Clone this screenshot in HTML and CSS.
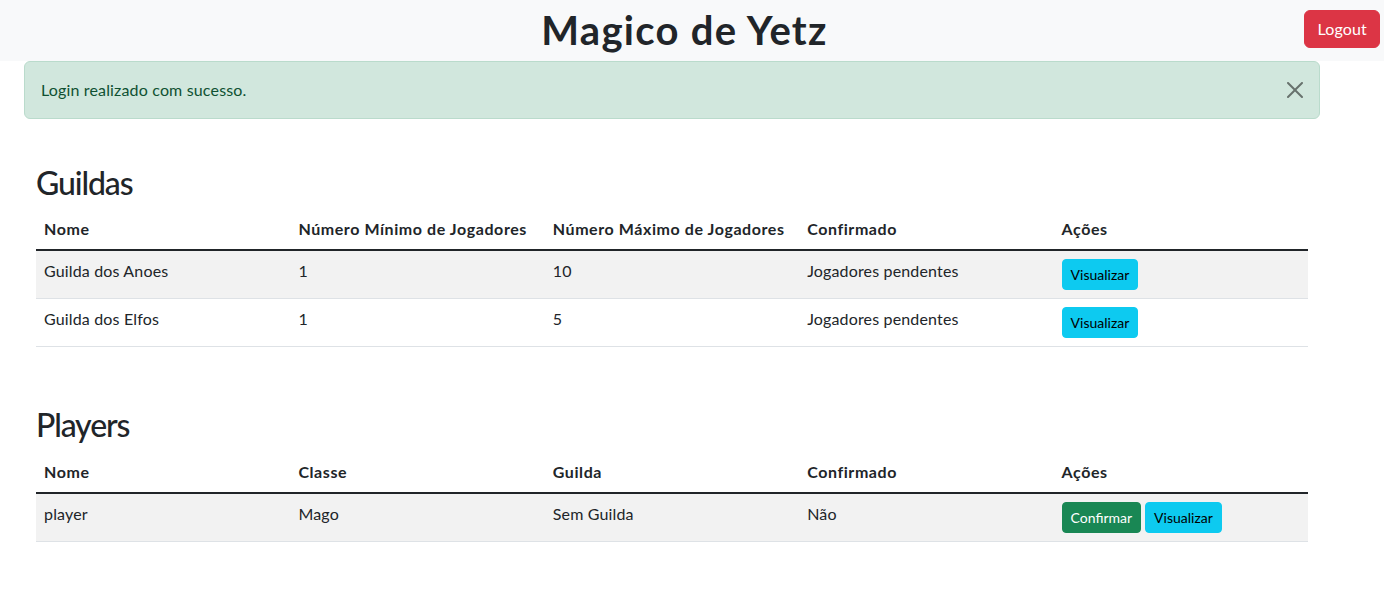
FILE: index.html
```html
<!DOCTYPE html>
<html lang="pt-BR">
<head>
<meta charset="utf-8">
<title>Magico de Yetz</title>
<link rel="stylesheet" href="styles.css">
</head>
<body>
<header class="topbar">
  <div class="topbar-side"></div>
  <h1 class="brand">Magico de Yetz</h1>
  <div class="topbar-side topbar-right">
    <button class="btn btn-danger" type="button">Logout</button>
  </div>
</header>

<div class="alert alert-success" role="alert">
  <span>Login realizado com sucesso.</span>
  <button class="btn-close" type="button" aria-label="Close">
    <svg viewBox="0 0 16 16" width="16" height="16" aria-hidden="true"><path d="M.293.293a1 1 0 0 1 1.414 0L8 6.586 14.293.293a1 1 0 1 1 1.414 1.414L9.414 8l6.293 6.293a1 1 0 0 1-1.414 1.414L8 9.414l-6.293 6.293a1 1 0 0 1-1.414-1.414L6.586 8 .293 1.707a1 1 0 0 1 0-1.414z"/></svg>
  </button>
</div>

<main class="content">
  <section class="block">
    <h2 class="block-title">Guildas</h2>
    <table class="table">
      <thead>
        <tr>
          <th>Nome</th>
          <th>Número Mínimo de Jogadores</th>
          <th>Número Máximo de Jogadores</th>
          <th>Confirmado</th>
          <th>Ações</th>
        </tr>
      </thead>
      <tbody>
        <tr class="striped">
          <td>Guilda dos Anoes</td>
          <td>1</td>
          <td>10</td>
          <td>Jogadores pendentes</td>
          <td><button class="btn btn-sm btn-info" type="button">Visualizar</button></td>
        </tr>
        <tr>
          <td>Guilda dos Elfos</td>
          <td>1</td>
          <td>5</td>
          <td>Jogadores pendentes</td>
          <td><button class="btn btn-sm btn-info" type="button">Visualizar</button></td>
        </tr>
      </tbody>
    </table>
  </section>

  <section class="block">
    <h2 class="block-title">Players</h2>
    <table class="table">
      <thead>
        <tr>
          <th>Nome</th>
          <th>Classe</th>
          <th>Guilda</th>
          <th>Confirmado</th>
          <th>Ações</th>
        </tr>
      </thead>
      <tbody>
        <tr class="striped">
          <td>player</td>
          <td>Mago</td>
          <td>Sem Guilda</td>
          <td>Não</td>
          <td class="actions"><button class="btn btn-sm btn-success" type="button">Confirmar</button><button class="btn btn-sm btn-info" type="button">Visualizar</button></td>
        </tr>
      </tbody>
    </table>
  </section>
</main>
</body>
</html>
```

FILE: styles.css
```css
* { box-sizing: border-box; }

html, body {
  margin: 0;
  padding: 0;
}

body {
  font-family: "Lato", "Noto Sans", "Liberation Sans", sans-serif;
  font-size: 16px;
  line-height: 24px;
  letter-spacing: 0.01em;
  color: #212529;
  background: #ffffff;
}

.topbar {
  display: grid;
  grid-template-columns: 1fr auto 1fr;
  align-items: start;
  height: 61px;
  background: #f8f9fa;
}

.brand {
  margin: 0 15px 0 0;
  font-size: 40px;
  line-height: 61px;
  font-weight: 700;
  letter-spacing: 0.032em;
  color: #212529;
}

.topbar-right {
  display: flex;
  justify-content: flex-end;
  padding: 10px 4px 0 0;
}

.btn {
  display: inline-block;
  font-family: inherit;
  font-size: 16px;
  line-height: 24px;
  letter-spacing: 0.01em;
  padding: 6px 12px;
  border: 1px solid transparent;
  border-radius: 6px;
  cursor: pointer;
  vertical-align: middle;
}

.btn-danger {
  background: #dc3545;
  border-color: #dc3545;
  color: #ffffff;
}

.btn-sm {
  font-size: 14px;
  line-height: 21px;
  letter-spacing: 0;
  padding: 4px 8px;
  border-radius: 4px;
}

.btn-info {
  background: #0dcaf0;
  border-color: #0dcaf0;
  color: #000000;
}

.btn-success {
  background: #198754;
  border-color: #198754;
  color: #ffffff;
}

.actions .btn + .btn {
  margin-left: 4px;
}

.alert {
  position: relative;
  width: 1296px;
  margin: 0 0 0 24px;
  padding: 16px 48px 16px 16px;
  border: 1px solid #badbcc;
  border-radius: 6px;
  background: #d1e7dd;
  color: #0f5132;
}

.btn-close {
  position: absolute;
  top: 0;
  right: 0;
  width: 48px;
  height: 56px;
  padding: 20px 16px;
  border: 0;
  background: transparent;
  opacity: 0.5;
  cursor: pointer;
  display: flex;
  align-items: center;
  justify-content: center;
}

.btn-close svg {
  display: block;
  fill: #000000;
}

.content {
  padding-left: 36px;
}

.block {
  width: 1272px;
  padding-top: 44px;
}

.block-title {
  margin: 0 0 6px 0;
  font-size: 32px;
  line-height: 40.4px;
  font-weight: 500;
  letter-spacing: -0.035em;
}

.table {
  width: 100%;
  table-layout: fixed;
  border-collapse: collapse;
  margin-bottom: 14px;
}

.table th,
.table td {
  padding: 8px;
  text-align: left;
  vertical-align: top;
  border-bottom: 1px solid #dee2e6;
}

.table th {
  font-weight: 700;
  letter-spacing: 0.036em;
}

.table thead th {
  border-bottom: 2px solid #212529;
}

.table tr.striped td {
  background: #f2f2f2;
}
```
